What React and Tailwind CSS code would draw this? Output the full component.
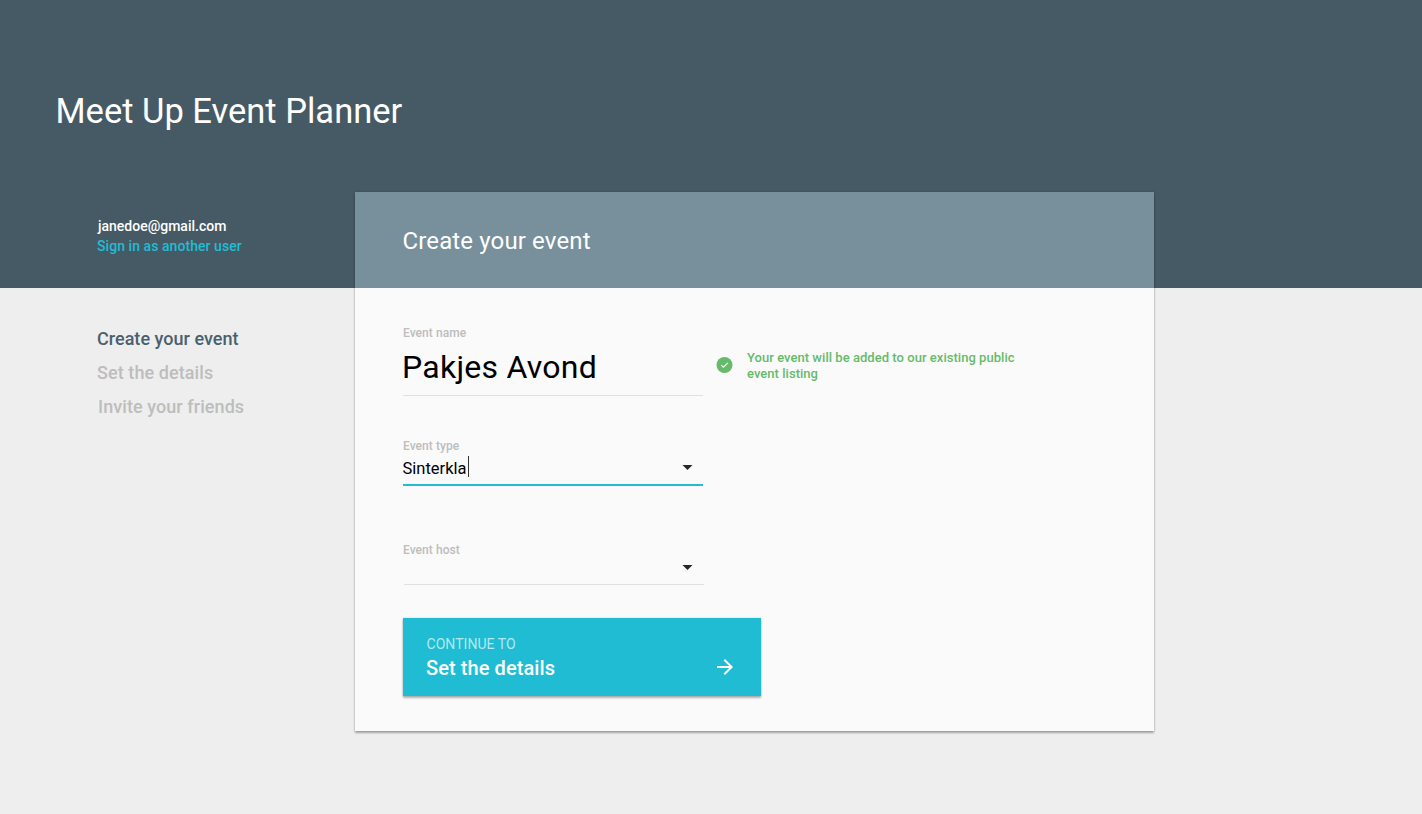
import React from 'react';

const steps = [
  { label: 'Create your event', style: 'text-[#4a616c] tracking-[0.02px]' },
  { label: 'Set the details', style: 'text-[#bdbdbd] tracking-[0.08px]' },
  { label: 'Invite your friends', style: 'text-[#bdbdbd] pl-px tracking-[0.07px]' },
];

function Caret() {
  return (
    <svg className="h-[5px] w-[11px] shrink-0" viewBox="0 0 11 5" fill="#262626" aria-hidden="true">
      <path d="M0.5 0h10l-5 5z" />
    </svg>
  );
}

function Label({ children }) {
  return (
    <div className="h-4 pl-[0.5px] text-[12px] leading-4 font-medium tracking-[0.06px] text-[#bdbdbd]">
      {children}
    </div>
  );
}

function Sidebar() {
  return (
    <aside className="w-[257.5px] shrink-0 pt-6">
      <div className="h-[106px] text-[14px] leading-5 font-medium">
        <div className="pl-px text-white">janedoe@gmail.com</div>
        <a className="block tracking-[0.06px] text-[#22bcd4]">Sign in as another user</a>
      </div>
      <nav>
        {steps.map((s) => (
          <a key={s.label} className={`block text-[18px] leading-[34px] font-medium ${s.style}`}>
            {s.label}
          </a>
        ))}
      </nav>
    </aside>
  );
}

export default function App() {
  return (
    <div className="h-[814px] overflow-hidden bg-[linear-gradient(#455a64_288px,#eeeeee_288px)] font-['Roboto',sans-serif]">
      <h1 className="h-48 pt-[91px] pl-[55.5px] text-[34.5px] leading-10 font-normal text-white">
        Meet Up Event Planner
      </h1>
      <div className="flex pl-[97px]">
        <Sidebar />
        <main className="flex h-[539.4px] w-[799.8px] flex-col bg-[#fafafa] shadow-[0_0_2px_rgba(0,0,0,0.16),0_2px_2px_rgba(0,0,0,0.3)]">
          <header className="flex h-24 items-center bg-[#78909c] pt-[2px] pl-12">
            <h2 className="text-[24px] leading-8 font-normal tracking-[0.13px] text-white">Create your event</h2>
          </header>
          <form className="flex flex-col items-start pt-[37px] pl-12">
            <Label>Event name</Label>
            <div className="flex h-[55px] items-start">
              <div className="h-[55px] w-[300px] border-b border-[#e0e0e0] pt-[6px] text-[32px] leading-10 tracking-[0.25px] text-black">
                <span className="-ml-[0.5px]">Pakjes Avond</span>
              </div>
              <svg className="mt-4 ml-[13.5px] h-4 w-[17px] shrink-0" viewBox="0 0 17 16" aria-hidden="true">
                <circle cx="8.5" cy="8" r="8" fill="#66bb6a" />
                <path d="M5.3 8.1l2.1 2.1 4.5-4.4" fill="none" stroke="#fafafa" strokeWidth="1.1" />
              </svg>
              <p className="mt-[9px] ml-[14px] w-[280px] text-[13px] leading-4 font-medium tracking-[0.035px] text-[#66bb6a]">
                Your event will be added to our existing public event listing
              </p>
            </div>

            <div className="mt-[42px]">
              <Label>Event type</Label>
              <div className="flex h-8 w-[300px] items-start justify-between border-b-2 border-[#22bcd4] pr-[9.5px]">
                <div className="flex">
                  <span className="mt-[5px] text-[16.5px] leading-5 text-black">Sinterkla</span>
                  <span className="mt-[2px] ml-[1.2px] h-[21px] w-px bg-[#333333]" />
                </div>
                <div className="pt-[11px]"><Caret /></div>
              </div>
            </div>

            <div className="mt-14">
              <Label>Event host</Label>
              <div className="ml-px flex h-[27px] w-[300px] items-start justify-end border-b border-[#e0e0e0] pr-[10.5px]">
                <div className="pt-[7px]"><Caret /></div>
              </div>
            </div>

            <button
              type="button"
              className="mt-[33px] flex h-[78px] w-[358.8px] items-center justify-between bg-[#20bcd3] pr-6 pl-[23.5px] text-left shadow-[0_0_2px_rgba(0,0,0,0.15),0_2px_2px_rgba(0,0,0,0.28)]"
            >
              <span className="-mt-[2px] flex flex-col">
                <span className="pl-[0.5px] text-[14px] leading-6 tracking-[0.05px] text-[#b5e8f0]">CONTINUE TO</span>
                <span className="text-[20px] leading-6 font-medium tracking-[0.08px] text-white">Set the details</span>
              </span>
              <svg className="mt-5 size-6" viewBox="0 0 24 24" fill="#ffffff" aria-hidden="true">
                <path d="M12 4l-1.41 1.41L16.17 11H4v2h12.17l-5.58 5.59L12 20l8-8z" />
              </svg>
            </button>
          </form>
        </main>
      </div>
    </div>
  );
}
